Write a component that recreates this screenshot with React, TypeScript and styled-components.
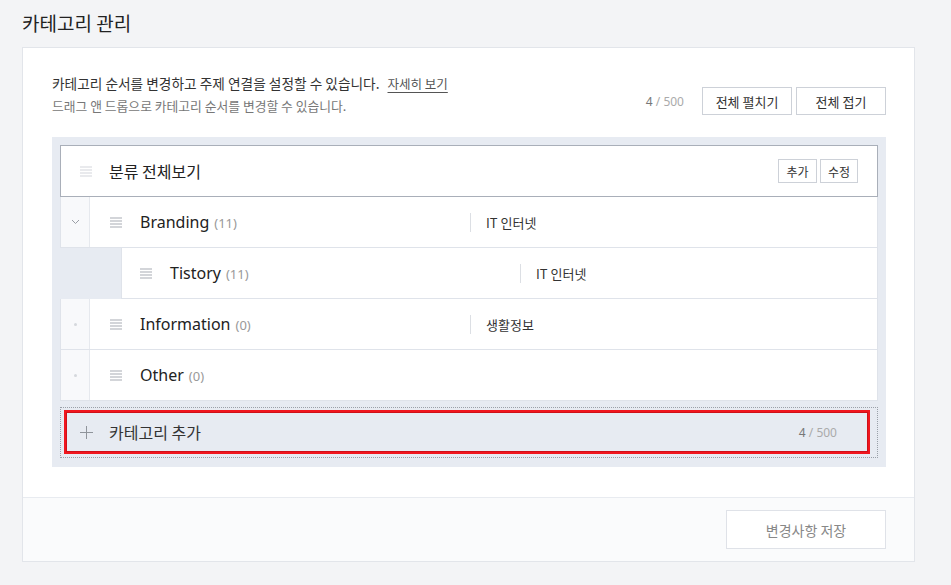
import React from "react";
import styled, { createGlobalStyle } from "styled-components";

const Global = createGlobalStyle`
  html, body { margin: 0; padding: 0; background: #f3f4f6; }
  body { font-family: "Noto Sans", "Noto Sans CJK KR", sans-serif; color: #222; }
  * { box-sizing: border-box; }
`;

const Page = styled.div`
  padding: 9px 36px 0 22px;
  width: 951px;
  height: 585px;
  overflow: hidden;
`;

const Title = styled.h1`
  margin: 0 0 11px;
  font-size: 19px;
  line-height: 27px;
  font-weight: 400;
  color: #222;
  font-family: "Noto Sans CJK KR", sans-serif;
`;

const Card = styled.section`
  width: 893px;
  background: #fff;
  border: 1px solid #e2e5ea;
`;

const CardBody = styled.div`
  padding: 25px 28px 30px 29px;
`;

const Header = styled.div`
  display: flex;
  align-items: flex-end;
  justify-content: space-between;
`;

const Desc = styled.div`
  font-family: "Noto Sans CJK KR", sans-serif;
`;

const DescLine = styled.p<{ $muted?: boolean }>`
  margin: 0 0 2px;
  font-size: ${(p) => (p.$muted ? "12.8px" : "13.7px")};
  line-height: 20px;
  color: ${(p) => (p.$muted ? "#777" : "#333")};
`;

const Link = styled.a`
  margin-left: 8px;
  color: #555;
  text-decoration: underline;
  text-underline-offset: 3px;
  font-size: 12.5px;
`;

const HeaderRight = styled.div`
  display: flex;
  align-items: center;
  gap: 4px;
  margin-bottom: 3px;
`;

const Count = styled.span<{ $mr?: number }>`
  font-size: 12px;
  color: #777;
  margin-right: ${(p) => p.$mr ?? 0}px;
  font-family: "Noto Sans", sans-serif;
  & > span { color: #aaa; }
`;

const Button = styled.button<{ $w: number; $h: number; $fs: number; $muted?: boolean }>`
  width: ${(p) => p.$w}px;
  height: ${(p) => p.$h}px;
  padding: 0;
  background: #fff;
  border: 1px solid ${(p) => (p.$muted ? "#dfe2e8" : "#cdd1d8")};
  color: ${(p) => (p.$muted ? "#888" : "#333")};
  font-size: ${(p) => p.$fs}px;
  font-family: "Noto Sans CJK KR", sans-serif;
  cursor: pointer;
`;

const Tree = styled.div`
  margin-top: 19px;
  background: #e7ebf2;
  padding: 8px 8px 9px;
`;

const RootRow = styled.div`
  height: 52px;
  background: #fff;
  border: 1px solid #a9afb9;
  display: flex;
  align-items: center;
  padding: 0 19px 0 19px;
`;

const RootName = styled.span`
  flex: 1;
  font-size: 16px;
  color: #222;
  margin-left: 17px;
  font-family: "Noto Sans CJK KR", sans-serif;
`;

const SmallBtns = styled.div`
  display: flex;
  gap: 3px;
`;

const Row = styled.div<{ $indent: number }>`
  height: 51px;
  margin-left: ${(p) => p.$indent}px;
  background: #fff;
  border: 1px solid #dfe3ea;
  border-top: none;
  display: flex;
  align-items: stretch;
`;

const ToggleCell = styled.div`
  width: 29px;
  background: #f8f9fb;
  border-right: 1px solid #e6e9ee;
  display: flex;
  align-items: center;
  justify-content: center;
`;

const Dot = styled.span`
  width: 3px;
  height: 3px;
  border-radius: 50%;
  background: #d5d8dd;
`;

const RowMain = styled.div<{ $pl: number }>`
  flex: 1;
  display: flex;
  align-items: center;
  padding-left: ${(p) => p.$pl}px;
`;

const Name = styled.div<{ $w: number }>`
  width: ${(p) => p.$w}px;
  margin-left: 18px;
  font-size: 16px;
  color: #222;
  display: flex;
  align-items: baseline;
  gap: 5px;
`;

const Num = styled.span`
  font-size: 13px;
  color: #999;
`;

const Topic = styled.div`
  display: flex;
  align-items: center;
  font-size: 13px;
  color: #333;
  font-family: "Noto Sans CJK KR", sans-serif;
  &::before {
    content: "";
    width: 1px;
    height: 19px;
    background: #dcdfe4;
    margin-right: 15px;
  }
`;

const AddOuter = styled.div`
  margin-top: 6px;
  border: 1px dotted #9aa0a8;
  padding: 2px 7px 3px 3px;
`;

const AddInner = styled.div`
  height: 44px;
  border: 2px solid #f0161e;
  box-shadow: inset 0 0 0 1px #cf1018;
  display: flex;
  align-items: center;
  padding: 0 31px 0 14px;
`;

const AddLabel = styled.span`
  flex: 1;
  margin-left: 16px;
  font-size: 16px;
  color: #333;
  font-family: "Noto Sans CJK KR", sans-serif;
`;

const Footer = styled.div`
  background: #fafbfc;
  border-top: 1px solid #e8ebf0;
  display: flex;
  justify-content: flex-end;
  padding: 12px 28px 12px;
`;

const Handle = ({ light }: { light?: boolean }) => (
  <svg width="12" height="11" viewBox="0 0 12 11">
    {[1, 4, 7, 10].map((y) => (
      <rect key={y} x="0" y={y - 0.5} width="12" height="1" fill={light ? "#d3d6db" : "#a8acb3"} />
    ))}
  </svg>
);

const Chevron = () => (
  <svg width="9" height="6" viewBox="0 0 9 6">
    <path d="M1 1 L4.5 4.5 L8 1" fill="none" stroke="#9a9ea5" strokeWidth="1" />
  </svg>
);

const Plus = () => (
  <svg width="13" height="13" viewBox="0 0 13 13">
    <rect x="6" y="0" width="1" height="13" fill="#8f949b" />
    <rect x="0" y="6" width="13" height="1" fill="#8f949b" />
  </svg>
);

type Item = {
  name: string;
  count: number;
  topic?: string;
  depth: number;
  toggle?: "chevron" | "dot";
};

const items: Item[] = [
  { name: "Branding", count: 11, topic: "IT 인터넷", depth: 0, toggle: "chevron" },
  { name: "Tistory", count: 11, topic: "IT 인터넷", depth: 1 },
  { name: "Information", count: 0, topic: "생활정보", depth: 0, toggle: "dot" },
  { name: "Other", count: 0, depth: 0, toggle: "dot" },
];

export default function App() {
  return (
    <>
      <Global />
      <Page>
        <Title>카테고리 관리</Title>
        <Card>
          <CardBody>
            <Header>
              <Desc>
                <DescLine>
                  카테고리 순서를 변경하고 주제 연결을 설정할 수 있습니다.
                  <Link>자세히 보기</Link>
                </DescLine>
                <DescLine $muted>드래그 앤 드롭으로 카테고리 순서를 변경할 수 있습니다.</DescLine>
              </Desc>
              <HeaderRight>
                <Count $mr={14}>
                  4 <span>/ 500</span>
                </Count>
                <Button $w={90} $h={28} $fs={13}>전체 펼치기</Button>
                <Button $w={90} $h={28} $fs={13}>전체 접기</Button>
              </HeaderRight>
            </Header>
            <Tree>
              <RootRow>
                <Handle light />
                <RootName>분류 전체보기</RootName>
                <SmallBtns>
                  <Button $w={39} $h={24} $fs={12}>추가</Button>
                  <Button $w={38} $h={24} $fs={12}>수정</Button>
                </SmallBtns>
              </RootRow>
              {items.map((it) => (
                <Row key={it.name} $indent={it.depth ? 61 : 0}>
                  {it.depth === 0 && (
                    <ToggleCell>{it.toggle === "chevron" ? <Chevron /> : <Dot />}</ToggleCell>
                  )}
                  <RowMain $pl={it.depth ? 18 : 20}>
                    <Handle />
                    <Name $w={it.depth ? 350 : 330}>
                      {it.name} <Num>({it.count})</Num>
                    </Name>
                    {it.topic && <Topic>{it.topic}</Topic>}
                  </RowMain>
                </Row>
              ))}
              <AddOuter>
                <AddInner>
                  <Plus />
                  <AddLabel>카테고리 추가</AddLabel>
                  <Count>
                    4 <span>/ 500</span>
                  </Count>
                </AddInner>
              </AddOuter>
            </Tree>
          </CardBody>
          <Footer>
            <Button $w={160} $h={39} $fs={14} $muted>변경사항 저장</Button>
          </Footer>
        </Card>
      </Page>
    </>
  );
}
